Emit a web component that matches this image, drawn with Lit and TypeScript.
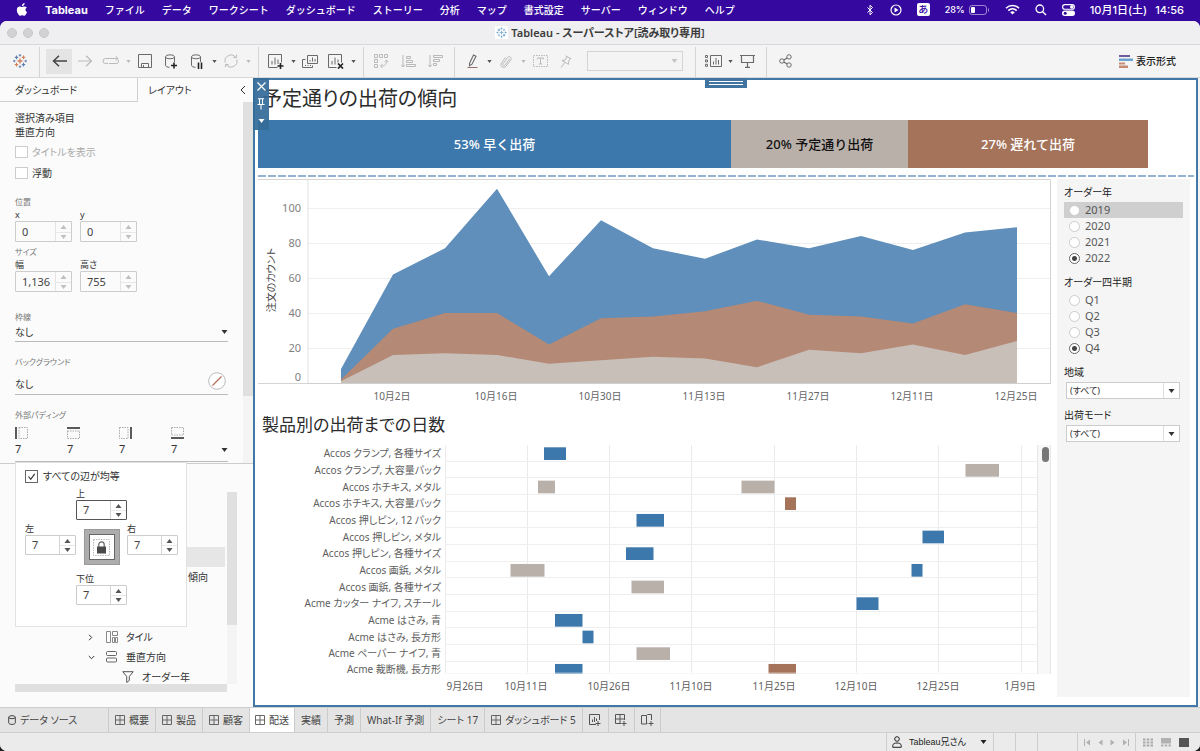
import { LitElement, html, css, svg, nothing } from 'lit';
import { customElement, property } from 'lit/decorators.js';
import { classMap } from 'lit/directives/class-map.js';

/* ---------- icons ---------- */

const icon = (w: number, h: number, body: unknown, cls = '') => html`<svg
  class=${cls}
  width=${w}
  height=${h}
  viewBox="0 0 ${w} ${h}"
  fill="none"
  stroke="currentColor"
  aria-hidden="true"
>${body}</svg>`;

const caret = (cls = '') => icon(7, 4, svg`<path d="M.5 0h6L3.5 4z" fill="currentColor" stroke="none"/>`, cls);

const plusMark = (x: number, y: number) =>
  svg`<path d="M${x - 3} ${y}h6M${x} ${y - 3}v6" stroke="#222" stroke-width="1.6"/>`;

const tableauMark = (a: string, b: string) => svg`
  <path d="M7 4.5v5M4.5 7h5" stroke=${a} stroke-width="1.4"/>
  <path d="M3.5 1.6v3.6M1.8 3.4h3.4M10.5 8.8v3.6M8.8 10.6h3.4" stroke=${b} stroke-width="1.1"/>
  <path d="M10.5 1.6v3.6M8.8 3.4h3.4M3.5 8.8v3.6M1.8 10.6h3.4" stroke=${a} stroke-width="1.1"/>
  <path d="M7 0v2.6M5.7 1.3h2.6M7 11.4V14M5.7 12.7h2.6M1.3 5.7v2.6M0 7h2.6M12.7 5.7v2.6M11.4 7H14" stroke=${b} stroke-width=".9"/>`;

const I = {
  apple: icon(12, 13, svg`<path fill="currentColor" stroke="none" d="M8.6 0c.1 1-.3 1.8-.8 2.3-.5.6-1.2.9-1.9.9-.1-.9.3-1.7.8-2.2C7.2.4 7.9.1 8.6 0zM10.9 4.5c-.9.5-1.4 1.2-1.4 2.2 0 1.1.7 1.9 1.6 2.2-.3 1-.8 1.8-1.3 2.5-.5.7-1 1.4-1.8 1.4s-1-.5-1.900-.5-1.200.5-1.900.5c-.8 0-1.400-.7-1.900-1.500C1.200 9.700.7 8 .9 6.500 1 4.600 2.200 3.500 3.600 3.500c.9 0 1.600.6 2.300.6.6 0 1.500-.6 2.600-.6.9 0 1.800.3 2.400 1z"/>`),
  bluetooth: icon(9, 12, svg`<path d="M1.500 3.500l5 5-2.500 2.300V1.200l2.500 2.300-5 5"/>`),
  play: icon(12, 12, svg`<circle cx="6" cy="6" r="5" stroke-width="1.2"/><path d="M4.5 3.6v4.800L8.5 6z" fill="currentColor" stroke="none"/>`),
  battery: icon(21, 10, svg`<rect x=".5" y=".5" width="17" height="9" rx="2.500" opacity=".5"/><rect x="2" y="2" width="4" height="6" rx="1" fill="currentColor" stroke="none"/><path d="M19.500 3.500v3" opacity=".5"/>`),
  wifi: icon(15, 11, svg`<path d="M1 4.200c3.700-3.600 9.300-3.600 13 0M3.300 6.600c2.400-2.300 6-2.300 8.400 0" stroke-width="1.600"/><path d="M7.500 10.500L5.200 8.200c1.300-1.200 3.300-1.200 4.600 0z" fill="currentColor" stroke="none"/>`),
  search: icon(12, 12, svg`<circle cx="4.800" cy="4.800" r="3.800" stroke-width="1.300"/><path d="M7.700 7.700L11 11" stroke-width="1.400"/>`),
  control: icon(13, 12, svg`<rect x=".6" y=".6" width="11.800" height="4.600" rx="2.300" stroke-width="1.100"/><circle cx="9.800" cy="2.900" r="1.300" fill="currentColor"/><rect x="0" y="6.600" width="13" height="5.400" rx="2.700" fill="currentColor" stroke="none"/><circle cx="3.200" cy="9.300" r="1.500" fill="#35089f" stroke="none"/>`),
  tableau: icon(14, 14, tableauMark('#d0815a', '#5f7fae')),
  doc: icon(13, 13, svg`<rect width="13" height="13" fill="#fff" stroke="none"/><g transform="translate(1.500 1.500) scale(.72)">${tableauMark('#86b2d6', '#4f8fc4')}</g>`),
  back: icon(15, 12, svg`<path d="M15 6H1.500M7 .8L1.500 6 7 11.200" stroke-width="1.500"/>`),
  forward: icon(15, 12, svg`<path d="M0 6h13.500M8 .8L13.500 6 8 11.200" stroke-width="1.200"/>`),
  redo: icon(18, 10, svg`<path d="M6 7.500H3.500a2.500 2.500 0 010-5H16M13.500 0L16.200 2.500 13.500 5M16.500 4v1.500a2 2 0 01-2 2H7"/>`),
  save: icon(14, 14, svg`<path d="M.5.5h13v13H.5zM3.500 13.500v-4h7v4M5.500 13v-2"/>`),
  dbAdd: icon(14, 15, svg`<ellipse cx="6" cy="2.800" rx="4.500" ry="2"/><path d="M1.500 2.800v8.500c0 1.200 2 2 4 2M10.500 2.800V8"/>${plusMark(10, 11.500)}`),
  dbPause: icon(14, 15, svg`<ellipse cx="6" cy="2.800" rx="4.500" ry="2"/><path d="M1.500 2.800v8.500c0 1.200 2 2 4 2M10.500 2.800V8"/><path d="M8.500 8.500V15M11.500 8.500V15" stroke="#222" stroke-width="1.600"/>`),
  refresh: icon(14, 14, svg`<path d="M1.200 8.500A6 6 0 0111.800 3.400M12.800 5.500A6 6 0 012.200 10.600M12.600.8l-.4 3-3-.6M1.400 13.200l.4-3 3 .6"/>`),
  newSheet: icon(16, 15, svg`<path d="M9.500 13.500H.5V.5h13v8M4 10.500V7M7 10.500V3.500M10 10V5.500"/>${plusMark(12.500, 12)}`),
  dupSheet: icon(16, 15, svg`<path d="M5.500 1.500h10v8h-10zM8 7.500V6M10.500 7.500V3.500M13 7.500V5M3.500 5.500h-3v8h10v-2M3 11.500h1M5.500 11.500h1M8 11.500h1"/>`),
  clearSheet: icon(16, 15, svg`<path d="M8.500 13.500H.5V.5h13v8M4 10.500V7M7 10.500V3.500M10 8.500v-3"/><path d="M10 9.500l5 5M15 9.500l-5 5" stroke="#222" stroke-width="1.700"/>`),
  swap: icon(15, 14, svg`<path d="M.5.5h3v3h-3zM5.500.5h3v3h-3zM10.500.5h3v3h-3zM.5 5.500h3v3h-3zM.5 10.500h3v3h-3zM7 12c4 0 5.500-1.500 5.500-5.500M10.500 8l2-2 2 2M8.500 10l-2 2 2 2"/>`),
  sortAsc: icon(15, 13, svg`<path d="M2 0v12M.3 9.800L2 12l1.700-2.200M5.500 1.500h4v2h-4zM5.500 5.500h6v2h-6zM5.500 9.500h9v2h-9z"/>`),
  sortDesc: icon(15, 13, svg`<path d="M2 0v12M.3 9.800L2 12l1.700-2.200M5.500.5h9v2h-9zM5.500 4.500h6v2h-6zM5.500 8.500h3v2h-3z"/>`),
  highlight: icon(11, 14, svg`<path d="M2.500 9.500L6.500 1l2.500 1.200-4 8-2.500 1.500z" stroke-width="1.100"/><path d="M.5 13.500h10" stroke="#966f6c"/>`),
  clip: icon(12, 13, svg`<path d="M9.500 4L5 10.200a1.200 1.200 0 01-2-1.400L7.500 2.600a2 2 0 013.300 2.300L6 11.300a2.800 2.800 0 01-4.600-3.200L5.500 2.400"/>`),
  textBox: icon(15, 12, svg`<rect x=".5" y=".5" width="14" height="11" stroke-dasharray="1.500 1"/><path d="M4.500 4.300V3h6v1.300M7.500 3v6M6 9h3"/>`),
  pin: icon(12, 13, svg`<path d="M5.500.8l5.700 3M7 1.800L5.200 5 2 5.500l6.500 3.800.2-3.200 1.600-3M5 7.300L1 12.500"/>`),
  layout: icon(17, 12, svg`<path d="M.5.5h2v2h-2zM.5 4.900h2v2h-2zM.5 9.300h2v2h-2zM5.500.5h11v11h-11zM8.500 9.500v-3M11 9.500V3M13.500 9.500V5"/>`),
  present: icon(15, 14, svg`<path d="M0 1.500h15M1.500 1.500v7h12v-7M7.500 8.500V13M5 13.300h5" stroke-width="1.200"/>`),
  share: icon(14, 14, svg`<circle cx="2.900" cy="7" r="2.200"/><circle cx="10" cy="2.900" r="2.200"/><circle cx="10" cy="11" r="2.200"/><path d="M4.800 5.900l3.300-1.900M4.800 8.100l3.300 1.900" stroke-width="1.200"/>`),
  showMe: icon(14, 13, svg`<g stroke="none"><path fill="#6d5b9e" d="M0 0h11v2H0z"/><path fill="#6fa3cf" d="M0 3.500h14v2.500H0z"/><path fill="#c68a72" d="M0 7.500h6v2H0zM0 10.500h9V13H0z"/></g>`),
  person: icon(10, 12, svg`<circle cx="5" cy="3" r="2.300"/><path d="M.8 11.300V9.500C.8 7.500 3 7 5 7s4.200.5 4.200 2.500v1.800z"/>`),
  cylinder: icon(8, 10, svg`<ellipse cx="4" cy="2.200" rx="3.300" ry="1.500"/><path d="M.7 2.200v5.600C.7 8.800 2.200 9.400 4 9.400s3.300-.6 3.300-1.600V2.200"/>`),
  grid: icon(10, 10, svg`<path d="M.5.5h9v9h-9zM5 .5v9M.5 5h9" stroke="#666"/>`),
  addSheet: icon(12, 12, svg`<path d="M7 10.500H.5V.5h10V6M3.500 8V5.500M5.500 8V3M7.500 7V4.500"/><path d="M6.500 9.500h5M9 7v5"/>`),
  addDash: icon(12, 12, svg`<path d="M6 9.500H.5V.5h9V6M5 .5v9M.5 5h9M6.500 9.500h5M9 7v5"/>`),
  addStory: icon(13, 12, svg`<path d="M5.500 10V1.500H.5V10h5l1-1M5.500 1.500l1-1h4V6M7.500 9.500h5M10 7v5"/>`),
  lock: icon(17, 17, svg`<rect x=".5" y=".5" width="16" height="16" stroke="#bbb" stroke-dasharray="1.500 1"/><rect x="4" y="7.500" width="9" height="7" fill="#4a4a4a" stroke="none"/><path d="M5.800 8V5.500a2.700 2.700 0 015.400 0V8" stroke="#666" stroke-width="1.200"/>`),
  chevronRight: icon(5, 7, svg`<path d="M1 .8l2.700 2.700L1 6.200"/>`),
  chevronDown: icon(7, 5, svg`<path d="M.8 1l2.700 2.700L6.200 1"/>`),
  collapse: icon(6, 10, svg`<path d="M5 1L1 5l4 4"/>`),
  tiled: icon(12, 12, svg`<path d="M.5.5h4v11h-4zM6.500.5h5v4h-5zM6.500 6.500h2v5h-2zM9.500 6.500h2v5h-2z" stroke="#888"/>`),
  vertical: icon(11, 12, svg`<g stroke="#666"><rect x=".5" y=".5" width="10" height="4" rx="1"/><rect x=".5" y="7" width="10" height="4" rx="1"/></g>`),
  filter: icon(12, 12, svg`<path d="M.8.7h10.400L7.300 5.500v4l-2.600 2v-6z" stroke="#555"/>`),
  noColor: icon(18, 18, svg`<circle cx="9" cy="9" r="8.300" fill="#fff" stroke="#bbb"/><path d="M4.500 13.500l9-9" stroke="#b4705a" stroke-width="1.300"/>`),
};

const sideIcon = (side: string) => {
  const parts: Record<string, unknown> = {
    left: svg`<path d="M1 0v12" stroke="#333" stroke-width="1.600"/><rect x="4" y=".5" width="8.500" height="11" stroke="#aaa" stroke-dasharray="1.500 1"/>`,
    top: svg`<path d="M0 1h13" stroke="#333" stroke-width="1.600"/><rect x=".5" y="4" width="12" height="7.500" stroke="#aaa" stroke-dasharray="1.500 1"/>`,
    right: svg`<path d="M12 0v12" stroke="#333" stroke-width="1.600"/><rect x=".5" y=".5" width="8.500" height="11" stroke="#aaa" stroke-dasharray="1.500 1"/>`,
    bottom: svg`<path d="M0 11h13" stroke="#333" stroke-width="1.600"/><rect x=".5" y=".5" width="12" height="7.500" stroke="#aaa" stroke-dasharray="1.500 1"/>`,
  };
  return icon(13, 12, parts[side]);
};

const base = css`
  * { box-sizing: border-box; }
  svg { display: block; flex: none; }
  button, input, select { font: inherit; color: inherit; margin: 0; padding: 0; border: 0; background: none; border-radius: 0; outline: 0; }
  a { color: inherit; text-decoration: none; }
`;

/* ---------- spin box ---------- */

@customElement('spin-box')
class SpinBox extends LitElement {
  @property() label = '';
  @property() value = '';
  @property({ type: Boolean }) active = false;
  @property({ type: Boolean }) focused = false;

  static styles = [base, css`
    :host { display: block; }
    label { display: block; font-size: 9px; line-height: 13px; color: #333; }
    .box { display: flex; height: 21px; border: 1px solid #ccc; border-radius: 1px; background: #fbfbfb; }
    .box.active { height: 20px; background: #fff; }
    .box.focused { border-color: #555; }
    input { flex: 1; min-width: 0; padding-left: 6px; font-size: 11px; color: #444; }
    .steps { flex: none; width: 16px; border-left: 1px solid #e4e4e4; display: grid; grid-template-rows: 1fr 1fr; color: #c0c0c0; }
    .steps button { display: grid; place-items: center; }
    .steps button + button { border-top: 1px solid #e8e8e8; }
    .active .steps { color: #555; border-left-color: #d4d4d4; }
    .up { transform: rotate(180deg); }
  `];

  render() {
    return html`
      <label for="v">${this.label}</label>
      <div class=${classMap({ box: true, active: this.active, focused: this.focused })}>
        <input id="v" type="text" .value=${this.value} />
        <span class="steps">
          <button aria-label="増やす">${caret('up')}</button>
          <button aria-label="減らす">${caret()}</button>
        </span>
      </div>`;
  }
}

/* ---------- area chart ---------- */

const TOTAL = [8, 62, 77, 111, 61, 93, 77, 71, 82, 77, 84, 76, 86, 89];
const LATE = [2, 31, 40, 40, 22, 37, 38, 41, 47, 39, 38, 34, 45, 40];
const ONTIME = [1, 16, 17, 16, 11, 13, 15, 14, 9, 19, 17, 22, 16, 24];
const WEEKS = ['10月2日', '10月16日', '10月30日', '11月13日', '11月27日', '12月11日', '12月25日'];
const PLOT_W = 743;
const PLOT_H = 204;

@customElement('area-chart')
class AreaChart extends LitElement {
  static styles = [base, css`
    :host { display: grid; grid-template-columns: 50px 1fr; font-size: 10px; }
    svg { width: 100%; height: 225px; overflow: visible; }
    .inner { height: 204px; }
    .num { fill: #808080; font-size: 11px; text-anchor: end; }
    .date { fill: #666; font-size: 10px; text-anchor: middle; }
    .axis { fill: #444; font-size: 10px; text-anchor: middle; }
  `];

  private y(v: number) { return PLOT_H - v * 1.75; }
  private x(i: number) { return 33 + i * 52; }
  private area(values: number[]) {
    const top = values.map((v, i) => `${this.x(i)},${this.y(v)}`).join(' ');
    return `${this.x(0)},${PLOT_H} ${top} ${this.x(values.length - 1)},${PLOT_H}`;
  }

  render() {
    return html`
      <svg>
        <path d="M0 .5h50M0 204.500h50" stroke="#d4d4d4" />
        ${[0, 20, 40, 60, 80, 100].map((v) => svg`
          <text class="num" x="43" y=${v === 0 ? 202 : this.y(v) + 4}>${v}</text>`)}
        <text class="axis" transform="translate(17 101) rotate(-90)">注文のカウント</text>
      </svg>
      <svg>
        <svg class="inner" width="100%" height=${PLOT_H} viewBox="0 0 ${PLOT_W} ${PLOT_H}" preserveAspectRatio="none">
          ${[20, 40, 60, 80, 100].map((v) => svg`<path d="M0 ${this.y(v) + 0.5}H${PLOT_W}" stroke="#efefef"/>`)}
          <polygon points=${this.area(TOTAL)} fill="#5f8fba"/>
          <polygon points=${this.area(LATE)} fill="#b48976"/>
          <polygon points=${this.area(ONTIME)} fill="#c9bfb9"/>
          <path d="M0 .5H742.500V204" fill="none" stroke="#d4d4d4"/>
          <path d="M0 0V204" stroke="#e0e0e0"/>
        </svg>
        <rect x="0" y="204" width="100%" height="1" fill="#cfcfcf"/>
        ${WEEKS.map((d, i) => svg`<text class="date" x="${((84 + i * 104) / PLOT_W) * 100}%" y="221">${d}</text>`)}
      </svg>`;
  }
}

/* ---------- gantt chart ---------- */

const BLUE = '#3d78ac';
const TAN = '#bab0aa';
const BROWN = '#a4735a';
type Bar = [number, number, string];
const PRODUCTS: { name: string; bars: Bar[] }[] = [
  { name: 'Accos クランプ, 各種サイズ', bars: [[99, 22, BLUE]] },
  { name: 'Accos クランプ, 大容量パック', bars: [[520.5, 33.5, TAN]] },
  { name: 'Accos ホチキス, メタル', bars: [[93, 17, TAN], [296.5, 33, TAN]] },
  { name: 'Accos ホチキス, 大容量パック', bars: [[340, 11, BROWN]] },
  { name: 'Accos 押しピン, 12 パック', bars: [[191.5, 27.5, BLUE]] },
  { name: 'Accos 押しピン, メタル', bars: [[477.5, 21.5, BLUE]] },
  { name: 'Accos 押しピン, 各種サイズ', bars: [[181, 27.5, BLUE]] },
  { name: 'Accos 画鋲, メタル', bars: [[65.5, 34, TAN], [466.5, 11, BLUE]] },
  { name: 'Accos 画鋲, 各種サイズ', bars: [[186.5, 32.5, TAN]] },
  { name: 'Acme カッター ナイフ, スチール', bars: [[411.5, 22, BLUE]] },
  { name: 'Acme はさみ, 青', bars: [[110, 27.5, BLUE]] },
  { name: 'Acme はさみ, 長方形', bars: [[137.5, 11, BLUE]] },
  { name: 'Acme ペーパー ナイフ, 青', bars: [[191.5, 33.5, TAN]] },
  { name: 'Acme 裁断機, 長方形', bars: [[110, 27.5, BLUE], [323.5, 27.5, BROWN]] },
];
const DAYS: [string, number, number][] = [
  ['9月26日', 0, 20], ['10月11日', 82, 81], ['10月26日', 164, 164], ['11月10日', 246, 246],
  ['11月25日', 329, 329], ['12月10日', 411, 411], ['12月25日', 493, 493], ['1月9日', 576, 575],
];
const ROW = 50 / 3;
const GANTT_W = 592;
const GANTT_H = 229;

@customElement('gantt-chart')
class GanttChart extends LitElement {
  static styles = [base, css`
    :host { display: grid; grid-template-columns: 187px 1fr 14px; }
    svg { width: 100%; height: 250px; overflow: visible; }
    .inner { height: 229px; overflow: hidden; }
    text { font-size: 10px; fill: #606060; }
    .name { text-anchor: end; }
    .date { text-anchor: middle; }
    .scroll { height: 229px; background: #f8f8f8; border: solid #e6e6e6; border-width: 0 1px; padding: 2px 0 0 4px; }
    .thumb { width: 7px; height: 15px; border-radius: 4px; background: #777; }
  `];

  render() {
    return html`
      <svg>
        ${PRODUCTS.map((p, i) => svg`<text class="name" x="183" y=${Math.round(i * ROW + (i === 13 ? 11 : 12.4))}>${p.name}</text>`)}
      </svg>
      <svg>
        <svg class="inner" width="100%" height=${GANTT_H} viewBox="0 0 ${GANTT_W} ${GANTT_H}" preserveAspectRatio="none">
          ${DAYS.map(([, x]) => svg`<path d="M${x + 0.5} 0V${GANTT_H}" stroke="#ebebeb"/>`)}
          ${PRODUCTS.map((_, i) => svg`<path d="M0 ${i === 13 ? 228.5 : Math.round((i + 1) * ROW) - 0.5}H${GANTT_W}" stroke="#efefef"/>`)}
          ${PRODUCTS.map((p, i) => p.bars.map(([x, w, c]) => svg`<rect x=${x} y=${i * ROW + 2.3} width=${w} height="12.700" fill=${c}/>`))}
          <rect y="227.500" width=${GANTT_W} height="1.500" fill="#fff" opacity=".5"/>
        </svg>
        ${DAYS.map(([d, , x]) => svg`<text class="date" x="${(x / GANTT_W) * 100}%" y="245">${d}</text>`)}
      </svg>
      <div class="scroll"><div class="thumb"></div></div>`;
  }
}

/* ---------- filters ---------- */

@customElement('filter-panel')
class FilterPanel extends LitElement {
  static styles = [base, css`
    :host { display: block; background: #f5f5f5; padding: 6px 7px; color: #333; font-size: 10px; }
    fieldset { border: 0; margin: 0 0 9px; padding: 0; }
    legend, .name { display: block; padding: 0; font-size: 10px; line-height: 14px; margin-bottom: 3px; color: #222; }
    .opt { display: flex; align-items: center; height: 16px; padding-left: 5px; gap: 5px; font-size: 11px; color: #555; }
    .opt.hover { background: #cfcfcf; }
    .opt input { appearance: none; width: 11px; height: 11px; border: 1px solid #ccc; border-radius: 50%; background: #fff; }
    .opt input:checked { border-color: #666; background: radial-gradient(circle, #444 0 2px, #fff 3px); }
    .pick { display: grid; grid-template-columns: 1fr 16px; margin: 0 3px 9px 2px; height: 17px; background: #fff; border: 1px solid #ccc; }
    .pick select { appearance: none; grid-area: 1 / 1 / 2 / 3; padding-left: 3px; font-size: 9px; line-height: 15px; }
    .pick svg { grid-area: 1 / 2; place-self: center; pointer-events: none; }
    .cell { grid-area: 1 / 2; border-left: 1px solid #ddd; pointer-events: none; }
  `];

  private radios(name: string, title: string, values: string[], selected: string, hover = '') {
    return html`<fieldset>
      <legend>${title}</legend>
      ${values.map((v) => html`<label class=${classMap({ opt: true, hover: v === hover })}>
        <input type="radio" name=${name} .checked=${v === selected} />${v}</label>`)}
    </fieldset>`;
  }

  private pick(id: string, title: string) {
    return html`<label class="name" for=${id}>${title}</label>
      <div class="pick"><select id=${id}><option>(すべて)</option></select><span class="cell"></span>${caret()}</div>`;
  }

  render() {
    return html`
      ${this.radios('year', 'オーダー年', ['2019', '2020', '2021', '2022'], '2022', '2019')}
      ${this.radios('quarter', 'オーダー四半期', ['Q1', 'Q2', 'Q3', 'Q4'], 'Q4')}
      ${this.pick('region', '地域')}
      ${this.pick('mode', '出荷モード')}`;
  }
}

/* ---------- layout side pane ---------- */

@customElement('layout-pane')
class LayoutPane extends LitElement {
  static styles = [base, css`
    :host { display: flex; flex-direction: column; background: #fbfbfb; color: #333; font-size: 10px; line-height: 14px; }
    .tabs { display: flex; height: 24px; }
    .tab { width: 138px; text-align: left; padding-left: 15px; border: solid #d0d0d0; border-width: 0 1px 1px 0; }
    .tab.current { flex: 1; padding-left: 10px; border: 0; display: flex; align-items: center; justify-content: space-between; }
    .tab.current button { padding-right: 7px; }
    .upper { display: flex; height: 362px; border-bottom: 1px solid #ccc; }
    .form { flex: 1; min-width: 0; padding: 9px 15px 0; }
    .track { flex: none; width: 10px; background: #f4f4f4; }
    .track .thumb { height: 294px; background: #e0e0e0; }
    .check { display: flex; align-items: center; gap: 4px; height: 12px; margin-top: 7px; }
    .check + .check { margin-top: 9px; }
    .check.off { color: #aaa; }
    .check input { appearance: none; width: 13px; height: 12px; border: 1px solid #ccc; background: #fff; }
    .small { font-size: 8px; line-height: 12px; color: #777; display: block; }
    .gap-l { margin-top: 17px; }
    .gap-xl { margin-top: 19px; }
    .gap-m { margin-top: 14px; }
    .gap-s { margin-top: 4px; }
    .pair { display: grid; grid-template-columns: 57px 57px; gap: 8px; }
    .drop { display: flex; align-items: center; justify-content: space-between; width: 100%; height: 19px; border-bottom: 1px solid #bbb; }
    .drop.tall { height: 27px; padding-right: 2px; }
    .drop.tall span { padding-top: 6px; }
    .pads { display: flex; width: 100%; margin-top: 6px; height: 35px; border-bottom: 1px solid #bbb; text-align: left; font-size: 11px; }
    .pads .side { width: 52px; line-height: 15px; }
    .pads .side:nth-child(4) { width: 13px; }
    .pads .side svg { margin-bottom: 2px; }
    .pads .more { margin: 21px 0 0 auto; }
    .lower { flex: 1; position: relative; display: grid; grid-template-columns: 1fr 10px 16px; grid-template-rows: 1fr auto; padding: 24px 0 15px; }
    .tree { margin: 0; padding: 59px 2px 0 15px; list-style: none; overflow: hidden; height: 196px; }
    .tree li { display: flex; align-items: center; height: 20px; }
    .tree .selected { background: #e6e6e6; }
    .tree .twist { width: 18px; }
    .tree .ic { width: 20px; }
    .tree .d2 { padding-left: 73px; }
    .tree .d3 { padding-left: 107px; }
    .tree .end { justify-content: flex-end; padding-right: 17px; }
    .vtrack { background: #f4f4f4; margin-top: 4px; }
    .vtrack .thumb { height: 133px; background: #e0e0e0; }
    .htrack { height: 8px; margin-left: 15px; background: #e0e0e0; }
    .popup { position: absolute; left: 15px; top: -2px; width: 172px; height: 165px; background: #fff; border: 1px solid #e2e2e2; padding: 7px 9px; }
    .popup .check { margin: 0; gap: 5px; height: 12px; }
    .popup .check input { height: 13px; border-color: #666; }
    .tick { width: 13px; height: 13px; display: grid; }
    .tick input, .tick svg { grid-area: 1 / 1; }
    .cross { display: grid; grid-template-columns: 51px 51px 51px; row-gap: 2px; margin-top: 5px; }
    .c2 { grid-column: 2; }
    .top { grid-row: 1; }
    .left { grid-row: 2; grid-column: 1; }
    .right { grid-row: 2; grid-column: 3; }
    .bottom { grid-row: 3; margin-top: 15px; }
    .locker { grid-row: 2; grid-column: 2; justify-self: center; width: 36px; height: 36px; margin: 7px 0 -10px; background: #adadad; border: 1px solid #999; padding: 4px; display: grid; }
    .locker span { display: grid; place-items: center; border: 1px solid #666; background: #fff; }
  `];

  render() {
    return html`
      <div class="tabs">
        <button class="tab">ダッシュボード</button>
        <div class="tab current"><span>レイアウト</span><button aria-label="折りたたむ">${I.collapse}</button></div>
      </div>
      <div class="upper">
        <div class="form">
          <div>選択済み項目</div>
          <div>垂直方向</div>
          <label class="check off"><input type="checkbox" disabled />タイトルを表示</label>
          <label class="check"><input type="checkbox" />浮動</label>
          <span class="small gap-l">位置</span>
          <div class="pair">
            <spin-box label="x" value="0"></spin-box>
            <spin-box label="y" value="0"></spin-box>
          </div>
          <span class="small gap-s">サイズ</span>
          <div class="pair">
            <spin-box label="幅" value="1,136"></spin-box>
            <spin-box label="高さ" value="755"></spin-box>
          </div>
          <span class="small gap-xl">枠線</span>
          <button class="drop"><span>なし</span>${caret()}</button>
          <span class="small gap-m">バックグラウンド</span>
          <button class="drop tall"><span>なし</span>${I.noColor}</button>
          <span class="small gap-m">外部パディング</span>
          <button class="pads">
            ${['left', 'top', 'right', 'bottom'].map((s) => html`<span class="side">${sideIcon(s)}7</span>`)}
            <span class="more">${caret()}</span>
          </button>
        </div>
        <div class="track"><div class="thumb"></div></div>
      </div>
      <div class="lower">
        <ul class="tree">
          <li class="selected"></li>
          <li class="end">傾向</li>
          <li></li>
          <li></li>
          <li class="d2"><span class="twist">${I.chevronRight}</span><span class="ic">${I.tiled}</span>タイル</li>
          <li class="d2"><span class="twist">${I.chevronDown}</span><span class="ic">${I.vertical}</span>垂直方向</li>
          <li class="d3"><span class="ic">${I.filter}</span>オーダー年</li>
        </ul>
        <div class="vtrack"><div class="thumb"></div></div>
        <span></span>
        <div class="htrack"></div>
        <div class="popup">
          <label class="check"><span class="tick"><input type="checkbox" checked />${icon(13, 13, svg`<path d="M3.500 6.500l2.200 2.800 4-5.500" stroke="#333" stroke-width="1.200"/>`)}</span>すべての辺が均等</label>
          <div class="cross">
            <spin-box class="c2 top" label="上" value="7" active focused></spin-box>
            <spin-box class="left" label="左" value="7" active></spin-box>
            <button class="locker" aria-label="固定"><span>${I.lock}</span></button>
            <spin-box class="right" label="右" value="7" active></spin-box>
            <spin-box class="c2 bottom" label="下位" value="7" active></spin-box>
          </div>
        </div>
      </div>`;
  }
}

/* ---------- application window ---------- */

type Tool = { i: unknown; n: string; dim?: boolean; drop?: boolean; on?: boolean };
const TOOLS: Record<string, Tool[]> = {
  nav: [
    { i: I.back, n: '戻る', on: true }, { i: I.forward, n: '進む', dim: true }, { i: I.redo, n: 'やり直し', dim: true, drop: true },
    { i: I.save, n: '保存' }, { i: I.dbAdd, n: '新しいデータ ソース' }, { i: I.dbPause, n: '自動更新の一時停止', drop: true },
    { i: I.refresh, n: '更新', dim: true, drop: true },
  ],
  sheet: [{ i: I.newSheet, n: '新しいワークシート', drop: true }, { i: I.dupSheet, n: '複製' }, { i: I.clearSheet, n: 'クリア', drop: true }],
  sort: [{ i: I.swap, n: '入れ替え', dim: true }, { i: I.sortAsc, n: '昇順', dim: true }, { i: I.sortDesc, n: '降順', dim: true }],
  mark: [{ i: I.highlight, n: 'ハイライト', drop: true }, { i: I.clip, n: 'グループ', dim: true, drop: true }, { i: I.textBox, n: 'ラベル', dim: true }, { i: I.pin, n: '固定', dim: true }],
  view: [{ i: I.layout, n: 'カードの表示', drop: true }, { i: I.present, n: 'プレゼンテーション' }],
  share: [{ i: I.share, n: '共有' }],
};
const MENU = ['ファイル', 'データ', 'ワークシート', 'ダッシュボード', 'ストーリー', '分析', 'マップ', '書式設定', 'サーバー', 'ウィンドウ', 'ヘルプ'];
const SHEETS: [string, boolean][] = [
  ['概要', true], ['製品', true], ['顧客', true], ['配送', true], ['実績', false], ['予測', false],
  ['What-If 予測', false], ['シート 17', false], ['ダッシュボード 5', true],
];

@customElement('app-root')
class AppRoot extends LitElement {
  static styles = [base, css`
    :host {
      display: flex; flex-direction: column; min-height: 100vh;
      font-family: "Noto Sans", "Noto Sans CJK JP", sans-serif; font-size: 10px; line-height: 14px;
      font-feature-settings: "palt"; color: #333;
      background: linear-gradient(#35089f 50%, #1d1d22 50%);
    }
    .menubar { display: flex; align-items: center; height: 21px; padding: 0 16px 2px; color: #fff; font-family: Inter, "Noto Sans CJK JP", sans-serif; font-feature-settings: normal; font-weight: 500; background: #35089f; }
    .brand { font-size: 11px; font-weight: 700; margin: 0 17px; }
    .menus { display: flex; gap: 17px; }
    .status { display: flex; align-items: center; margin-left: auto; gap: 15px; }
    .ime { width: 13px; height: 13px; border-radius: 2px; background: #fff; color: #35089f; display: grid; place-items: center; line-height: 13px; }
    .power { display: flex; align-items: center; gap: 4px; font-size: 9px; }
    .clock { display: flex; gap: 8px; font-size: 11px; }
    .window { flex: 1; display: flex; flex-direction: column; border-radius: 7px; overflow: hidden; background: #f3f3f3; }
    .titlebar { display: grid; grid-template-columns: 1fr auto 1fr; align-items: center; height: 24px; padding: 0 7px; background: #efeef0; border-bottom: 1px solid #d8d8d8; }
    .lights { display: flex; gap: 6px; }
    .light { width: 10px; height: 10px; border-radius: 50%; background: #d2d2d4; border: 1px solid #c6c6c8; }
    .title { display: flex; align-items: center; gap: 3px; font-size: 11px; font-weight: 600; color: #3c3c3c; }
    .toolbar { display: flex; height: 33px; padding-top: 2px; background: #f4f4f4; border-bottom: 1px solid #d8d8d8; }
    .group { display: flex; align-items: center; border-right: 1px solid #d4d4d4; padding: 0 6px 2px 4px; }
    .group.logo { width: 40px; padding: 0 6px 2px 13px; }
    .group.nav { padding-left: 6px; }
    .group.sort { gap: 1px; }
    .group.mark { padding-right: 12px; }
    .group.share { border: 0; padding-left: 6px; }
    .tool { width: 26px; height: 25px; display: grid; place-items: center; color: #6a6a6a; }
    .tool.on { background: #e4e4e4; color: #444; }
    .tool.dim { color: #b9b9b9; }
    .arrow { width: 8px; display: grid; place-items: center; color: #555; }
    .arrow svg { width: 5px; height: 3px; }
    .arrow.dim { color: #b9b9b9; }
    .fit { display: grid; grid-template-columns: 1fr 15px; width: 96px; height: 20px; margin-left: 8px; border: 1px solid #d4d4d4; color: #c4c4c4; }
    .fit select { appearance: none; grid-area: 1 / 1 / 2 / 3; }
    .fit svg { grid-area: 1 / 2; place-self: center; pointer-events: none; }
    .showme { display: flex; align-items: center; gap: 3px; margin-left: auto; margin-right: 24px; padding-bottom: 2px; font-weight: 500; color: #222; }
    .body { flex: 1; display: grid; grid-template-columns: 253px 1fr; padding-right: 2px; }
    .dash { position: relative; border: 2px solid #4278a8; background: #fff; padding: 0 2px 0 3px; display: flex; flex-direction: column; }
    h1, h2 { margin: 0; font-weight: 400; color: #2c2c2c; }
    h1 { font-size: 20px; line-height: 24px; padding: 7px 0 9px 4px; }
    h2 { font-size: 17px; line-height: 20px; padding: 11px 0 10px 4px; }
    .split { display: flex; height: 48px; margin-right: 46px; color: #fff; font-size: 13px; font-feature-settings: normal; font-weight: 500; line-height: 48px; text-align: center; }
    .early { background: #3d78ac; }
    .ontime { background: #bab0aa; color: #111; }
    .late { background: #a4735a; }
    .rule { height: 2px; margin: 7px 0 2px; background: repeating-linear-gradient(90deg, #92b3d6 0 8px, transparent 8px 10px); }
    .cols { flex: 1; display: grid; grid-template-columns: 1fr 133px; gap: 6px; padding: 0 4px 8px 0; }
    .grip { position: absolute; left: 450px; top: -2px; width: 42px; height: 10px; background: #41759f; padding: 3px 4px 0; display: grid; grid-template-rows: 1px 1px; gap: 2px; }
    .grip i { background: #fff; }
    .handle { position: absolute; left: -2px; top: -2px; width: 16px; height: 52px; background: rgba(52, 108, 153, .93); color: #fff; display: grid; grid-template-rows: repeat(3, 17px); }
    .handle button { display: grid; place-items: center; }
    .tabs { display: flex; height: 26px; background: #e4e4e4; border: solid #cfcfcf; border-width: 1px 0; }
    .tabs a { display: flex; align-items: center; gap: 4px; padding: 0 6px; border-right: 1px solid #cbcbcb; color: #444; }
    .tabs a.source { width: 109px; padding: 0 8px; }
    .tabs a.current { background: #fff; padding: 0 5px; }
    .tabs .add { width: 26px; display: grid; place-items: center; border-right: 1px solid #cbcbcb; color: #555; }
    .footer { display: flex; justify-content: flex-end; height: 18px; background: #ebebeb; }
    .footer > * { border-left: 1px solid #cdcdcd; }
    .user { display: flex; align-items: center; width: 107px; padding: 0 6px 0 5px; gap: 7px; color: #222; font-family: "Liberation Sans", "Noto Sans CJK JP", sans-serif; font-size: 9px; }
    .user .more { margin-left: auto; }
    .slot { width: 22px; }
    .slot.wide { width: 40px; }
    .pager, .modes { display: flex; align-items: center; color: #b0b0b0; }
    .pager { width: 58px; justify-content: space-around; padding: 0 2px; }
    .modes { width: 65px; gap: 8px; padding-left: 7px; }
  `];

  private group(name: string, extra: unknown = nothing) {
    return html`<div class="group ${name}">
      ${TOOLS[name].map((t) => html`
        <button class=${classMap({ tool: true, on: !!t.on, dim: !!t.dim })} aria-label=${t.n}>${t.i}</button>
        ${t.drop ? html`<button class=${classMap({ arrow: true, dim: !!t.dim })} aria-label="${t.n} メニュー">${caret()}</button>` : nothing}`)}
      ${extra}
    </div>`;
  }

  render() {
    return html`
      <header class="menubar">
        ${I.apple}<span class="brand">Tableau</span>
        <nav class="menus">${MENU.map((m) => html`<a href="#">${m}</a>`)}</nav>
        <div class="status">
          ${I.bluetooth}${I.play}<span class="ime">あ</span>
          <span class="power">28%${I.battery}</span>
          ${I.wifi}${I.search}${I.control}
          <span class="clock"><span>10月1日(土)</span><span>14:56</span></span>
        </div>
      </header>
      <div class="window">
        <div class="titlebar">
          <div class="lights"><span class="light"></span><span class="light"></span><span class="light"></span></div>
          <div class="title">${I.doc}Tableau - スーパーストア[読み取り専用]</div>
        </div>
        <div class="toolbar">
          <div class="group logo">${I.tableau}</div>
          ${this.group('nav')} ${this.group('sheet')} ${this.group('sort')}
          ${this.group('mark', html`<div class="fit"><select aria-label="表示サイズ" disabled></select>${caret()}</div>`)}
          ${this.group('view')} ${this.group('share')}
          <button class="showme">${I.showMe}表示形式</button>
        </div>
        <div class="body">
          <layout-pane></layout-pane>
          <main class="dash">
            <h1>予定通りの出荷の傾向</h1>
            <div class="split">
              ${([['early', 473, '53% 早く出荷'], ['ontime', 177, '20% 予定通り出荷'], ['late', 240, '27% 遅れて出荷']] as [string, number, string][]).map(
                ([c, n, t]) => html`<div class=${c} style="flex: ${n} 0 0">${t}</div>`)}
            </div>
            <div class="rule"></div>
            <div class="cols">
              <div>
                <area-chart></area-chart>
                <h2>製品別の出荷までの日数</h2>
                <gantt-chart></gantt-chart>
              </div>
              <filter-panel></filter-panel>
            </div>
            <div class="grip"><i></i><i></i></div>
            <div class="handle">
              <button aria-label="削除">${icon(9, 9, svg`<path d="M.5.5l8 8M8.500.5l-8 8" stroke-width="1.200"/>`)}</button>
              <button aria-label="固定">${icon(8, 12, svg`<path d="M1 .7h6M2.500 1v5M5.500 1v5M.5 6.500h7M4 6.500v5" stroke-width="1.100"/>`)}</button>
              <button aria-label="その他">${caret()}</button>
            </div>
          </main>
        </div>
        <nav class="tabs">
          <a class="source" href="#">${I.cylinder}データ ソース</a>
          ${SHEETS.map(([n, g]) => html`<a href="#" class=${classMap({ current: n === '配送' })}>${g ? I.grid : nothing}${n}</a>`)}
          <button class="add" aria-label="新しいワークシート">${I.addSheet}</button>
          <button class="add" aria-label="新しいダッシュボード">${I.addDash}</button>
          <button class="add" aria-label="新しいストーリー">${I.addStory}</button>
        </nav>
        <footer class="footer">
          <button class="user">${I.person}<span>Tableau兄さん</span><span class="more">${caret()}</span></button>
          <span class="slot"></span><span class="slot"></span><span class="slot wide"></span>
          <span class="pager">
            ${icon(6, 7, svg`<path d="M.5 0v7"/><path d="M6 .5v6L2 3.500z" fill="currentColor" stroke="none"/>`)}
            ${icon(5, 7, svg`<path d="M4.500.5v6L.5 3.500z" fill="currentColor" stroke="none"/>`)}
            ${icon(5, 7, svg`<path d="M.5.5v6l4-3z" fill="currentColor" stroke="none"/>`)}
            ${icon(6, 7, svg`<path d="M5.500 0v7"/><path d="M0 .5v6l4-3z" fill="currentColor" stroke="none"/>`)}
          </span>
          <span class="modes">
            ${icon(10, 9, svg`<path d="M0 1.500h10M0 4.500h10M0 7.500h10" stroke="#a8a8a8" stroke-width="2" stroke-dasharray="2.500 1.250"/>`)}
            ${icon(10, 9, svg`<path d="M0 0h10v5.500H0z" fill="#b0b0b0" stroke="none"/><path d="M0 7.500h10" stroke-width="2" stroke-dasharray="2.500 1.250"/>`)}
            ${icon(10, 9, svg`<path d="M0 0h10v9H0z" fill="#555" stroke="none"/>`)}
          </span>
        </footer>
      </div>`;
  }
}
